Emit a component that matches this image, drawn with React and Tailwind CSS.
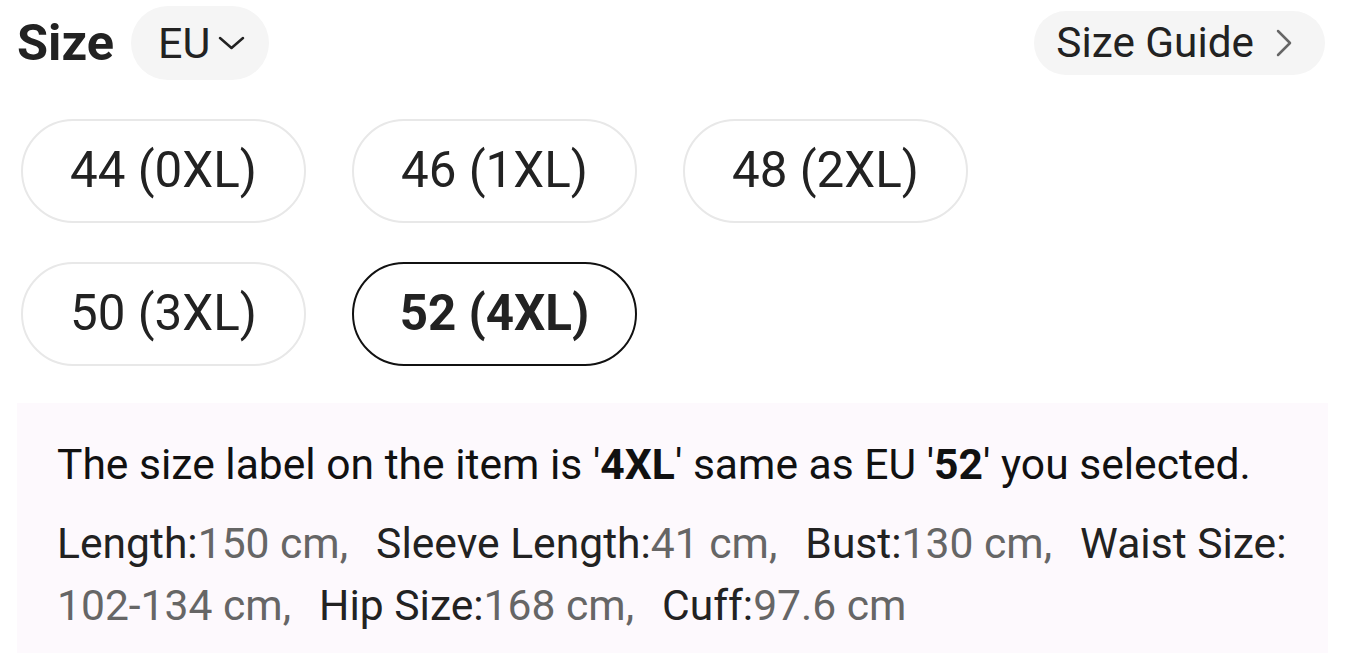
import React from "react";

const sizes = [
  { label: "44 (0XL)" },
  { label: "46 (1XL)" },
  { label: "48 (2XL)" },
  { label: "50 (3XL)" },
  { label: "52 (4XL)", selected: true },
];

const measures = [
  ["Length:", "150 cm"],
  ["Sleeve Length:", "41 cm"],
  ["Bust:", "130 cm"],
  ["Waist Size:", "102-134 cm"],
  ["Hip Size:", "168 cm"],
  ["Cuff:", "97.6 cm"],
];

export default function App() {
  return (
    <div
      className="min-h-[653px] w-[1366px] overflow-hidden bg-white pl-[17px] pr-[38px] text-[#222]"
      style={{ fontFamily: "Roboto, 'Liberation Sans', sans-serif" }}
    >
      <div className="mr-[3px] flex h-[86px] items-center justify-between">
        <div className="flex items-center gap-[17px]">
          <span className="text-[50.5px] font-bold leading-none text-[#222]">Size</span>
          <button className="flex h-[74px] items-center gap-[8px] rounded-full bg-[#f5f5f5] pl-[27px] pr-[24px]">
            <span className="text-[43px] leading-none text-[#222]">EU</span>
            <svg width="27" height="16" viewBox="0 0 27 16" fill="none">
              <polyline points="2,3 13.5,13 25,3" stroke="#222" strokeWidth="2.5" strokeLinecap="round" strokeLinejoin="round" />
            </svg>
          </button>
        </div>
        <button className="flex h-[64px] items-center gap-[22px] rounded-full bg-[#f5f5f5] pl-[22px] pr-[33px]">
          <span className="text-[42.3px] leading-none text-[#222]">Size Guide</span>
          <svg width="16" height="28" viewBox="0 0 16 28" fill="none">
            <polyline points="2,2 14,14 2,26" stroke="#666" strokeWidth="2.5" strokeLinecap="round" strokeLinejoin="round" />
          </svg>
        </button>
      </div>

      <div className="mt-[33px] grid grid-cols-[repeat(3,285px)] gap-x-[46px] gap-y-[39px] pl-[4px]">
        {sizes.map((s) => (
          <button
            key={s.label}
            className={
              s.selected
                ? "flex h-[104px] items-center justify-center rounded-full border-[2.5px] border-[#111] text-[49.3px] font-bold leading-none text-[#222]"
                : "flex h-[104px] items-center justify-center rounded-full border-2 border-[#e8e8e8] text-[49.3px] leading-none text-[#222]"
            }
          >
            {s.label}
          </button>
        ))}
      </div>

      <div className="mt-[37px] bg-[#fdf9fd] pb-[30px] pl-[40px] pr-[28px] pt-[33px]">
        <p className="text-[42.6px] leading-[56px] text-[#111]">
          The size label on the item is '<span className="font-bold">4XL</span>' same as EU '<span className="font-bold">52</span>' you selected.
        </p>
        <p className="mt-[20px] text-[42.6px] leading-[62px] text-[#222]">
          {measures.map(([k, v], i) => (
            <React.Fragment key={k}>
              <span className="whitespace-nowrap">{k}</span>
              <wbr />
              <span className="whitespace-nowrap text-[#666]">
                {v}
                {i < measures.length - 1 ? "," : ""}
              </span>
              {i < measures.length - 1 ? <span className="inline-block w-[28px]"> </span> : null}
            </React.Fragment>
          ))}
        </p>
      </div>
    </div>
  );
}
